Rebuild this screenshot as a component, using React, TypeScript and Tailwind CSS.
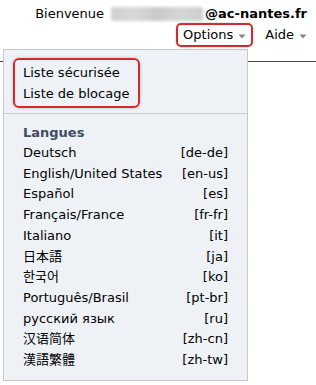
import React from "react";

const Caret = () => (
  <svg width="8" height="5" viewBox="0 0 8 5" className="ml-[5px] mt-[2px]">
    <path d="M0.5 0.5 L7.5 0.5 L4 4.5 Z" fill="#878787" />
  </svg>
);

const langs: [string, string][] = [
  ["Deutsch", "[de-de]"],
  ["English/United States", "[en-us]"],
  ["Español", "[es]"],
  ["Français/France", "[fr-fr]"],
  ["Italiano", "[it]"],
  ["日本語", "[ja]"],
  ["한국어", "[ko]"],
  ["Português/Brasil", "[pt-br]"],
  ["русский язык", "[ru]"],
  ["汉语简体", "[zh-cn]"],
  ["漢語繁體", "[zh-tw]"],
];

export default function App() {
  return (
    <div
      className="relative w-[316px] h-[385px] bg-white text-[13px] text-black overflow-hidden"
      style={{ fontFamily: '"DejaVu Sans", Verdana, "Noto Sans CJK JP", "Noto Sans CJK KR", sans-serif' }}
    >
      <div className="h-[62px] border-b border-[#4a4a4a] flex flex-col items-end pr-[9px] pt-[5px]">
        <div className="flex items-center leading-[18px]">
          <span>Bienvenue</span>
          <span className="ml-[7px] mr-[2px] inline-block w-[92px] h-[14px] rounded-[3px] bg-[linear-gradient(90deg,#cfcfcf,#d9d9d9,#c9c9c9,#d6d6d6,#cdcdcd)] blur-[1.5px]" />
          <span className="font-bold">@ac-nantes.fr</span>
        </div>
        <div className="flex items-center">
          <div className="flex items-center h-[24px] border-2 border-[#d42a2f] rounded-[5px] pl-[5px] pr-[5px] shadow-[0_0_2px_rgba(0,0,0,0.25)]">
            <span className="leading-[18px]">Options</span>
            <Caret />
          </div>
          <div className="flex items-center ml-[12px] h-[24px]">
            <span className="leading-[18px]">Aide</span>
            <Caret />
          </div>
        </div>
      </div>

      <div className="absolute top-[49px] left-[3px] w-[245px] h-[332px] bg-[#eef2f7] border border-[#c6c9cc] pt-[8px]">
        <div className="ml-[9px] w-[127px] border-2 border-[#d42a2f] rounded-[6px] py-[2px] pl-[8px] leading-[21px] shadow-[0_0_3px_rgba(0,0,0,0.25)]">
          <div>Liste sécurisée</div>
          <div>Liste de blocage</div>
        </div>
        <div className="mt-[5px] border-t border-[#c9cdd2]" />
        <div className="pt-[8px] pl-[19px] pr-[19px] leading-[20.7px]">
          <div className="font-bold text-[#3f4d63] leading-[21px]">Langues</div>
          {langs.map(([n, c]) => (
            <div key={c} className="flex justify-between">
              <span>{n}</span>
              <span>{c}</span>
            </div>
          ))}
        </div>
      </div>
    </div>
  );
}
